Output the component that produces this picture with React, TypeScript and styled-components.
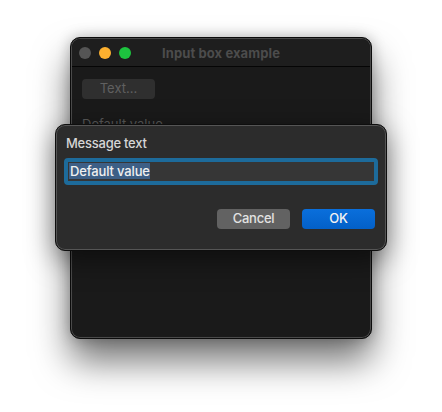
import React from 'react'
import styled, { createGlobalStyle } from 'styled-components'

const GlobalStyle = createGlobalStyle`
  html, body {
    margin: 0;
    padding: 0;
    background: #ffffff;
    font-family: "Inter", "Liberation Sans", sans-serif;
    font-size: 13px;
    overflow: hidden;
  }
`

const Page = styled.div`
  position: relative;
  width: 442px;
  height: 412px;
  padding: 37px 0 0 70px;
  box-sizing: border-box;
`

const Window = styled.div`
  width: 302px;
  height: 302px;
  box-sizing: border-box;
  background: #1a1a1a;
  border: 1px solid #0c0c0c;
  border-radius: 10px;
  box-shadow: inset 0 0 0 1px #4a4a4a, 0 22px 36px rgba(0, 0, 0, 0.55), 0 0 14px rgba(0, 0, 0, 0.25);
  overflow: hidden;
`

const TitleBar = styled.div`
  position: relative;
  display: flex;
  align-items: center;
  gap: 8px;
  height: 28px;
  padding: 0 7px;
  box-sizing: border-box;
  background: #1e1e1e;
  border-bottom: 1px solid #050505;
  margin: 1px 1px 0;
  border-radius: 9px 9px 0 0;
`

const Light = styled.span<{ color: string }>`
  width: 12px;
  height: 12px;
  border-radius: 50%;
  background: ${p => p.color};
`

const Title = styled.div`
  position: absolute;
  left: 0;
  right: 0;
  top: 6px;
  line-height: 16px;
  text-align: center;
  font-weight: 700;
  font-size: 13px;
  letter-spacing: 0.1px;
  color: #4c4c4c;
`

const Content = styled.div`
  display: flex;
  flex-direction: column;
  align-items: flex-start;
  gap: 17px;
  padding: 12px 11px;
`

const GhostButton = styled.div`
  width: 73px;
  height: 20px;
  line-height: 19px;
  text-align: center;
  background: #2f2f2f;
  border-radius: 4px;
  color: #606060;
  font-size: 13px;
`

const GhostLabel = styled.div`
  color: #585858;
  font-size: 13px;
`

const Dialog = styled.div`
  position: absolute;
  left: 55px;
  top: 124px;
  width: 332px;
  height: 127px;
  box-sizing: border-box;
  padding: 11px 8px 0 8px;
  display: flex;
  flex-direction: column;
  background: #2c2c2c;
  border: 1px solid #0e0e0e;
  border-radius: 10px;
  box-shadow: inset 0 0 0 1px #555555, 0 8px 28px rgba(0, 0, 0, 0.5);
`

const Message = styled.div`
  margin-left: 2px;
  color: #d6d6d6;
  font-size: 13px;
  font-weight: 500;
  line-height: 15px;
  letter-spacing: -0.25px;
`

const InputBox = styled.div`
  margin-top: 7px;
  height: 27px;
  box-sizing: border-box;
  display: flex;
  align-items: center;
  padding: 0 1px 1px;
  background: #363636;
  border: 4px solid #1d6b9b;
  border-radius: 4px;
`

const Selected = styled.span`
  background: #3d5f86;
  color: #f0f0f0;
  font-size: 13px;
  font-weight: 500;
  line-height: 16px;
  letter-spacing: -0.15px;
  padding-left: 1px;
`

const Actions = styled.div`
  display: flex;
  justify-content: flex-end;
  gap: 12px;
  margin-top: 24px;
  padding-right: 3px;
`

const Action = styled.div<{ primary?: boolean }>`
  width: 73px;
  height: 20px;
  line-height: 19px;
  text-align: center;
  border-radius: 4px;
  font-size: 13px;
  font-weight: 500;
  letter-spacing: -0.25px;
  color: ${p => (p.primary ? '#f2f2f2' : '#e2e2e2')};
  background: ${p => (p.primary ? 'linear-gradient(#0a6fdc, #0360c8)' : '#626262')};
`

const App: React.FC = () => (
  <Page>
    <GlobalStyle />
    <Window>
      <TitleBar>
        <Light color="#555555" />
        <Light color="#fdb02f" />
        <Light color="#1dc43f" />
        <Title>Input box example</Title>
      </TitleBar>
      <Content>
        <GhostButton>Text...</GhostButton>
        <GhostLabel>Default value</GhostLabel>
      </Content>
    </Window>
    <Dialog>
      <Message>Message text</Message>
      <InputBox>
        <Selected>Default value</Selected>
      </InputBox>
      <Actions>
        <Action>Cancel</Action>
        <Action primary>OK</Action>
      </Actions>
    </Dialog>
  </Page>
)

export default App
